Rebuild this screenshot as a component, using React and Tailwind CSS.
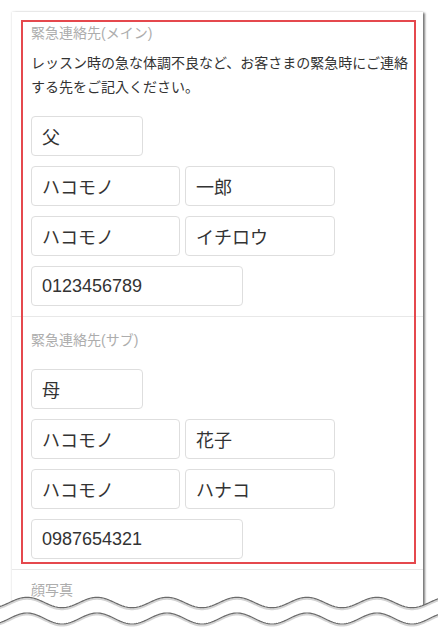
import React from "react";

function wavePath(center, amp, period, phase, x0, x1) {
  let d = "";
  for (let x = x0; x <= x1; x += 1) {
    const y = center - amp * Math.cos((2 * Math.PI * (x - phase)) / period);
    d += (x === x0 ? "M" : "L") + x.toFixed(1) + " " + y.toFixed(2) + " ";
  }
  return d;
}

function Waves() {
  const top = 590;
  const w1 = wavePath(602.5 - top, 5.2, 70, 27, -2, 440);
  const w2 = wavePath(618.5 - top, 5.5, 70, 27, -2, 440);
  return (
    <svg
      className="absolute left-0 top-[590px]"
      width="438"
      height="46"
      viewBox="0 0 438 46"
    >
      <path d={w1 + " L440 46 L-2 46 Z"} fill="#ffffff" />
      <path d={w1} fill="none" stroke="#d4d4d4" strokeWidth="2" transform="translate(0 1.5)" />
      <path d={w1} fill="none" stroke="#6b6b6b" strokeWidth="1.2" />
      <path d={w2} fill="none" stroke="#d4d4d4" strokeWidth="2" transform="translate(0 1.5)" />
      <path d={w2} fill="none" stroke="#6b6b6b" strokeWidth="1.2" />
    </svg>
  );
}

function Field({ value, w }) {
  return (
    <input
      readOnly
      value={value}
      className={`h-10 ${w} rounded-[4px] border border-[#dedede] bg-white px-[10px] text-[18px] text-[#333] outline-none`}
      style={{ fontFamily: '"Liberation Sans", "Noto Sans CJK JP", sans-serif' }}
    />
  );
}

function Contact({ rel, last, first, lastKana, firstKana, tel }) {
  return (
    <div className="flex flex-col gap-[10px]">
      <Field value={rel} w="w-[112px]" />
      <div className="flex gap-[5px]">
        <Field value={last} w="w-[149px]" />
        <Field value={first} w="w-[150px]" />
      </div>
      <div className="flex gap-[5px]">
        <Field value={lastKana} w="w-[149px]" />
        <Field value={firstKana} w="w-[150px]" />
      </div>
      <Field value={tel} w="w-[212px]" />
    </div>
  );
}

export default function App() {
  return (
    <div
      className="relative h-[636px] w-[438px] overflow-hidden bg-white pl-3 pt-3"
      style={{ fontFamily: '"Liberation Sans", "Noto Sans CJK JP", sans-serif' }}
    >
      <div className="relative w-[411px] bg-white shadow-[2px_0_2px_-0.5px_rgba(0,0,0,0.5),0_0_2px_rgba(0,0,0,0.18)]">
        <section className="border-b border-[#e8e8e8] pb-[10px] pl-[19px] pr-[8px] pt-[12px]">
          <h2 className="text-[14px] leading-[18px] font-normal text-[#adadad]">
            緊急連絡先(メイン)
          </h2>
          <p className="mt-[9px] text-[14px] leading-[24px] text-[#333]">
            レッスン時の急な体調不良など、お客さまの緊急時にご連絡する先をご記入ください。
          </p>
          <div className="mt-[17px]">
            <Contact
              rel="父"
              last="ハコモノ"
              first="一郎"
              lastKana="ハコモノ"
              firstKana="イチロウ"
              tel="0123456789"
            />
          </div>
        </section>
        <section className="border-b border-[#e8e8e8] pb-[10px] pl-[19px] pr-[8px] pt-[14px]">
          <h2 className="text-[14px] leading-[18px] font-normal text-[#adadad]">
            緊急連絡先(サブ)
          </h2>
          <div className="mt-[20px]">
            <Contact
              rel="母"
              last="ハコモノ"
              first="花子"
              lastKana="ハコモノ"
              firstKana="ハナコ"
              tel="0987654321"
            />
          </div>
        </section>
        <section className="h-[80px] pl-[19px] pr-[8px] pt-[11px]">
          <h2 className="text-[14px] leading-[18px] font-normal text-[#adadad]">顔写真</h2>
        </section>
        <div className="pointer-events-none absolute left-[9px] top-[8px] h-[544px] w-[395px] border-2 border-[#e5484d]" />
      </div>
      <Waves />
    </div>
  );
}
